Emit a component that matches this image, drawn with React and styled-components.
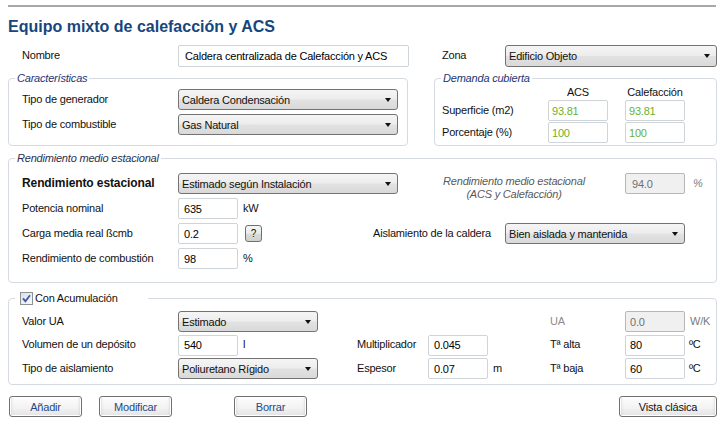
import React from "react";
import styled, { createGlobalStyle } from "styled-components";

const GlobalStyle = createGlobalStyle`
  html, body {
    margin: 0;
    background: #fff;
  }
  body {
    font-family: "Liberation Sans", Arial, sans-serif;
    font-size: 11px;
    letter-spacing: -0.2px;
    color: #111;
  }
`;

const Page = styled.div`
  width: 726px;
  box-sizing: border-box;
  padding: 5px 9px 0 8px;
`;

const Rule = styled.div`
  height: 2px;
  margin-right: 1px;
  background: #a8a8a8;
`;

const Title = styled.h1`
  margin: 10px 0 0;
  font: bold 16px/19px "Liberation Sans", Arial, sans-serif;
  letter-spacing: 0;
  color: #17467d;
`;

const Grid = styled.div`
  display: grid;
  grid-template-columns: ${p => p.$cols};
  grid-template-rows: ${p => p.$rows || "none"};
  grid-auto-rows: 21px;
  row-gap: ${p => p.$gap || 0}px;
  padding: ${p => p.$pad || "0"};
  margin-top: ${p => p.$mt || 0}px;
`;

const Columns = styled.div`
  display: grid;
  grid-template-columns: 400px 283px;
  column-gap: 26px;
  margin-top: 4px;
`;

const Box = styled.fieldset`
  margin: ${p => p.$mt || 0}px 0 0;
  padding: 0;
  min-width: 0;
  border: 1px solid #d5dbe0;
  border-radius: 4px;
`;

const Legend = styled.legend`
  margin-left: 6px;
  padding: 0 2px;
  line-height: 14px;
  font-style: italic;
  color: ${p => (p.$dark ? "#2c3050" : "#1d3574")};
`;

const CheckLegend = styled.legend`
  display: flex;
  align-items: center;
  gap: 2px;
  margin-left: 6px;
  padding: 0 30px 0 5px;
  line-height: 14px;
  color: #111;
`;

const Label = styled.span`
  grid-column: ${p => p.$col || "auto"};
  align-self: center;
  padding-bottom: 2px;
  white-space: nowrap;
  color: ${p => (p.$muted ? "#8c8c8c" : "#111")};
  font-size: ${p => (p.$bold ? "12px" : "11px")};
  font-weight: ${p => (p.$bold ? "bold" : "normal")};
  letter-spacing: ${p => (p.$bold ? "-0.1px" : "-0.2px")};
`;

const Unit = styled.span`
  grid-column: ${p => p.$col || "auto"};
  align-self: center;
  margin-left: ${p => p.$ml ?? 5}px;
  padding-bottom: 2px;
  white-space: nowrap;
  color: ${p => (p.$muted ? "#7b7b7b" : "#111")};
  font-style: ${p => (p.$italic ? "italic" : "normal")};
`;

const Note = styled.div`
  grid-column: ${p => p.$col};
  align-self: start;
  margin-top: 2px;
  padding-left: 30px;
  line-height: 13px;
  text-align: center;
  font-style: italic;
  color: #5a5a5a;
  white-space: nowrap;
`;

const Head = styled.span`
  grid-column: ${p => p.$col};
  width: 60px;
  align-self: end;
  text-align: center;
  line-height: 14px;
`;

const Cell = styled.div`
  grid-column: ${p => p.$col || "auto"};
  display: flex;
  align-items: center;
  min-width: 0;
`;

const Input = styled.input`
  grid-column: ${p => p.$col || "auto"};
  box-sizing: border-box;
  width: ${p => p.$w || 60}px;
  height: ${p => p.$h || 21}px;
  margin: 0;
  padding: 0 ${p => p.$pad ?? 5}px;
  border: 1px solid ${p => (p.disabled ? "#b4b8bb" : "#cfd4d8")};
  border-radius: 2px;
  background: ${p => (p.disabled ? "#f0f0f0" : "#fff")};
  color: ${p => (p.disabled ? "#707070" : p.$green ? "#69b22c" : "#000")};
  font: inherit;
  letter-spacing: inherit;
  outline: none;
`;

const Combo = styled.div`
  grid-column: ${p => p.$col || "auto"};
  box-sizing: border-box;
  width: ${p => p.$w}px;
  height: ${p => p.$h || 21}px;
  display: flex;
  align-items: center;
  padding: 0 6px 0 3px;
  border: 1px solid #737373;
  border-radius: 3px;
  background: linear-gradient(#f5f5f5 0%, #ededed 48%, #e2e2e2 52%, #d9d9d9 100%);
  white-space: nowrap;
`;

const Arrow = styled.span`
  margin-left: auto;
  width: 0;
  height: 0;
  border-left: 3.5px solid transparent;
  border-right: 3.5px solid transparent;
  border-top: 4px solid #111;
`;

const HelpButton = styled.button`
  box-sizing: border-box;
  width: 17px;
  height: 17px;
  margin: 0 0 0 7px;
  padding: 0;
  border: 1px solid #707070;
  border-radius: 3px;
  background: linear-gradient(#f6f6f6, #e8e8e8 50%, #dadada 51%, #d0d0d0);
  font: inherit;
  font-size: 10px;
  color: #111;
`;

const ButtonBar = styled.div`
  display: flex;
  margin-top: 11px;
  padding-left: 1px;
`;

const Button = styled.button`
  box-sizing: border-box;
  width: ${p => p.$w || 73}px;
  height: 21px;
  margin: 0 0 0 ${p => (p.$push ? "auto" : `${p.$ml || 0}px`)};
  padding: 0;
  border: 1px solid #707070;
  border-radius: 3px;
  background: linear-gradient(#fdfdfd, #f3f3f3 55%, #e4e4e4);
  box-shadow: inset 0 0 0 1px #fff, inset 3px 0 3px -2px #c9c9c9,
    inset -3px 0 3px -2px #c9c9c9;
  font: inherit;
  letter-spacing: inherit;
  color: ${p => (p.$plain ? "#111" : "#1d4a86")};
`;

const Check = () => (
  <svg width="13" height="13" viewBox="0 0 13 13">
    <defs>
      <linearGradient id="cb" x1="0" y1="0" x2="1" y2="1">
        <stop offset="0" stopColor="#dcdfe4" />
        <stop offset="1" stopColor="#fafafa" />
      </linearGradient>
    </defs>
    <rect x="0.5" y="0.5" width="12" height="12" fill="url(#cb)" stroke="#8c9196" />
    <path d="M3 6.4 L5.4 9.2 L10 3.2" fill="none" stroke="#3e5aa8" strokeWidth="1.8" />
  </svg>
);

export default function App() {
  return (
    <Page>
      <GlobalStyle />
      <Rule />
      <Title>Equipo mixto de calefacción y ACS</Title>

      <Grid $cols="156px 231px 33px 63px 212px" $rows="22px" $pad="0 0 0 14px" $mt={9}>
        <Label>Nombre</Label>
        <Input $w={231} $h={22} $pad={6} readOnly value="Caldera centralizada de Calefacción y ACS" />
        <Label $col="4">Zona</Label>
        <Combo $w={212} $h={22}>
          Edificio Objeto
          <Arrow />
        </Combo>
      </Grid>

      <Columns>
        <Box>
          <Legend>Características</Legend>
          <Grid $cols="156px 220px" $gap={4} $pad="4px 0 0 13px">
            <Label>Tipo de generador</Label>
            <Combo $w={220}>
              Caldera Condensación
              <Arrow />
            </Combo>
            <Label>Tipo de combustible</Label>
            <Combo $w={220}>
              Gas Natural
              <Arrow />
            </Combo>
          </Grid>
        </Box>

        <Box>
          <Legend>Demanda cubierta</Legend>
          <Grid $cols="106px 77px 60px" $rows="14px 21px 21px" $gap={1} $pad="0 0 2px 7px">
            <Head $col="2">ACS</Head>
            <Head $col="3">Calefacción</Head>
            <Label>Superficie (m2)</Label>
            <Input $green $pad={3} readOnly value="93.81" />
            <Input $green $pad={3} readOnly value="93.81" />
            <Label>Porcentaje (%)</Label>
            <Input $green $pad={3} readOnly value="100" />
            <Input $green $pad={3} readOnly value="100" />
          </Grid>
        </Box>
      </Columns>

      <Box $mt={5}>
        <Legend $dark>Rendimiento medio estacional</Legend>
        <Grid $cols="156px 195px 132px 120px 60px 1fr" $gap={4} $pad="8px 0 13px 13px">
          <Label $bold>Rendimiento estacional</Label>
          <Combo $w={220}>
            Estimado según Instalación
            <Arrow />
          </Combo>
          <Note $col="3 / span 2">
            Rendimiento medio estacional
            <br />
            (ACS y Calefacción)
          </Note>
          <Input $col="5" disabled value="94.0" $pad={6} />
          <Unit $muted $italic $ml={8}>%</Unit>

          <Label>Potencia nominal</Label>
          <Cell>
            <Input readOnly value="635" />
            <Unit>kW</Unit>
          </Cell>

          <Label $col="1">Carga media real ßcmb</Label>
          <Cell>
            <Input readOnly value="0.2" />
            <HelpButton>?</HelpButton>
          </Cell>
          <Label>Aislamiento de la caldera</Label>
          <Combo $col="4 / span 2" $w={180}>
            Bien aislada y mantenida
            <Arrow />
          </Combo>

          <Label $col="1">Rendimiento de combustión</Label>
          <Cell>
            <Input readOnly value="98" />
            <Unit>%</Unit>
          </Cell>
        </Grid>
      </Box>

      <Box $mt={8}>
        <CheckLegend>
          <Check />
          Con Acumulación
        </CheckLegend>
        <Grid $cols="156px 179px 71px 122px 75px 60px 1fr" $gap={2.5} $pad="6px 0 5px 13px">
          <Label>Valor UA</Label>
          <Combo $w={140}>
            Estimado
            <Arrow />
          </Combo>
          <Label $col="5" $muted>UA</Label>
          <Input disabled value="0.0" $pad={4} />
          <Unit $muted>W/K</Unit>

          <Label>Volumen de un depósito</Label>
          <Cell>
            <Input readOnly value="540" />
            <Unit>l</Unit>
          </Cell>
          <Label>Multiplicador</Label>
          <Input readOnly value="0.045" />
          <Label>Tª alta</Label>
          <Input readOnly value="80" $pad={4} />
          <Unit $ml={4}>ºC</Unit>

          <Label>Tipo de aislamiento</Label>
          <Combo $w={140}>
            Poliuretano Rígido
            <Arrow />
          </Combo>
          <Label>Espesor</Label>
          <Cell>
            <Input readOnly value="0.07" />
            <Unit>m</Unit>
          </Cell>
          <Label>Tª baja</Label>
          <Input readOnly value="60" $pad={4} />
          <Unit $ml={4}>ºC</Unit>
        </Grid>
      </Box>

      <ButtonBar>
        <Button>Añadir</Button>
        <Button $ml={17}>Modificar</Button>
        <Button $ml={62}>Borrar</Button>
        <Button $push $plain $w={98}>Vista clásica</Button>
      </ButtonBar>
    </Page>
  );
}
